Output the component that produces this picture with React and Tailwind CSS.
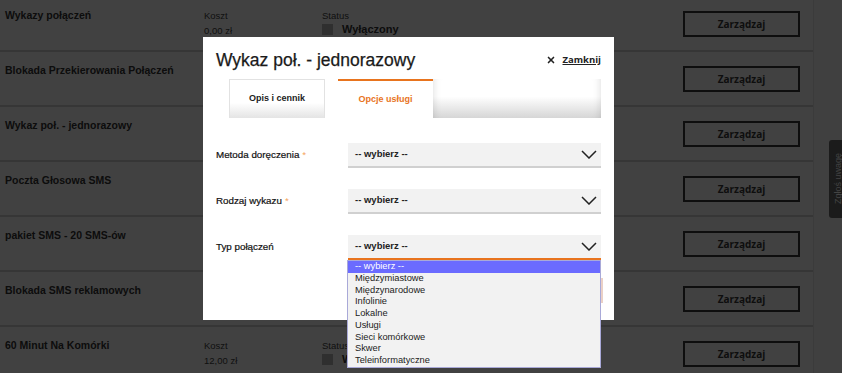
import { X } from "lucide-react";

const rows = [
  { name: "Wykazy połączeń", cost: "0,00 zł" },
  { name: "Blokada Przekierowania Połączeń", cost: "0,00 zł" },
  { name: "Wykaz poł. - jednorazowy", cost: "3,00 zł" },
  { name: "Poczta Głosowa SMS", cost: "0,00 zł" },
  { name: "pakiet SMS - 20 SMS-ów", cost: "5,00 zł" },
  { name: "Blokada SMS reklamowych", cost: "0,00 zł" },
  { name: "60 Minut Na Komórki", cost: "12,00 zł" },
];

const fields = ["Metoda doręczenia", "Rodzaj wykazu", "Typ połączeń"];

const options = [
  "Międzymiastowe",
  "Międzynarodowe",
  "Infolinie",
  "Lokalne",
  "Usługi",
  "Sieci komórkowe",
  "Skwer",
  "Teleinformatyczne",
];

function Chevron() {
  return (
    <svg width="16" height="9" viewBox="0 0 16 9" className="shrink-0">
      <polyline points="1,1 8,8 15,1" fill="none" stroke="#222" strokeWidth="1.5" />
    </svg>
  );
}

function ServiceRow({ row, first }) {
  return (
    <div className={`flex h-[55px] border-b-2 border-[#d2d2d2] ${first ? "mt-[-3px]" : ""}`}>
      <div className="w-[204px] pl-[5px] pt-[11px] text-[10.5px] font-bold text-[#333]">{row.name}</div>
      <div className="w-[118px] pt-[11px] text-[9.5px] leading-[15px] text-[#444]">
        <div>Koszt</div>
        <div>{row.cost}</div>
      </div>
      <div className="pt-[11px] text-[9.5px] leading-[15px] text-[#444]">
        <div>Status</div>
        <div className="flex items-center gap-[9px] mt-[-1px]">
          <span className="w-[11px] h-[11px] bg-[#b8b8b8]"></span>
          <span className="text-[11px] font-bold text-[#333]">Wyłączony</span>
        </div>
      </div>
      <button className="ml-auto mr-[13px] mt-[14px] w-[117px] h-[26px] border-2 border-[#3a3a3a] text-[10px] font-bold text-[#3a3a3a] font-['Open_Sans',sans-serif]">
        Zarządzaj
      </button>
    </div>
  );
}

export default function App() {
  return (
    <div className="relative w-[842px] h-[373px] overflow-hidden bg-white font-['Liberation_Sans',Arial,sans-serif]">
      {/* page under the dialog */}
      <div className="flex h-full">
        <div className="w-[814px] border-r border-[#e6e6e6]">
          {rows.map((r, i) => (
            <ServiceRow key={r.name} row={r} first={i === 0} />
          ))}
        </div>
        <div className="flex-1 bg-[#fafafa]"></div>
      </div>

      {/* dim overlay */}
      <div className="absolute inset-0 bg-black/[0.745]"></div>

      {/* feedback tab */}
      <div className="absolute right-0 top-[140px] w-[13px] h-[78px] rounded-l-[3px] bg-[#1b1b1b] overflow-hidden flex items-center">
        <span className="[writing-mode:vertical-rl] rotate-180 text-[9px] text-[#444] ml-[3px] whitespace-nowrap">Zgłoś uwagę</span>
      </div>

      {/* dialog */}
      <div className="absolute left-[203px] top-[37px] w-[411px] h-[283px] bg-white">
        <div className="flex items-start pl-[13px] pr-[13px] pt-[12px]">
          <h2 className="text-[17.5px] leading-[22px] text-[#1a1a1a] [-webkit-text-stroke:0.25px_#1a1a1a]">Wykaz poł. - jednorazowy</h2>
          <button className="ml-auto mt-[4px] flex items-center gap-[6px] text-[9.5px] font-bold text-[#222] font-['Open_Sans',sans-serif]">
            <X size={10} strokeWidth={4} />
            <span className="underline">Zamknij</span>
          </button>
        </div>

        <div className="flex mt-[8px] ml-[26px] mr-[13px] h-[39px]">
          <div className="w-[96px] flex items-center justify-center border border-[#e2e2e2] border-b-0 bg-gradient-to-b from-white from-60% to-[#e4e4e4] text-[9px] font-bold text-[#222]">
            Opis i cennik
          </div>
          <div className="w-[13px]"></div>
          <div className="w-[95px] flex items-center justify-center border-t-2 border-[#e8741e] bg-white text-[9px] font-bold text-[#e8741e]">
            Opcje usługi
          </div>
          <div className="flex-1 bg-gradient-to-b from-white from-45% to-[#d6d6d6] shadow-[inset_8px_0_8px_-8px_rgba(0,0,0,0.15),inset_-8px_0_8px_-8px_rgba(0,0,0,0.15)]"></div>
        </div>

        <div className="mt-[25px] ml-[13px] mr-[13px] flex flex-col gap-[21px]">
          {fields.map((f, i) => (
            <div key={f} className="flex items-center">
              <div className="w-[132px] text-[9.8px] text-[#111]">
                <span className="[-webkit-text-stroke:0.2px_#111]">{f}</span>
                {i < 2 && <span className="text-[#f5a35c] ml-[3px]">*</span>}
              </div>
              <div
                className={`relative w-[253px] h-[25px] flex items-center pl-[7px] pr-[4px] bg-[#f2f2f2] border-b-2 ${
                  i === 2 ? "border-[#e8741e]" : "border-[#d0d0d0]"
                }`}
              >
                <span className="text-[9.5px] font-bold text-[#222]">-- wybierz --</span>
                <span className="ml-auto">
                  <Chevron />
                </span>
                {i === 2 && (
                  <ul className="absolute left-[-1px] top-[25px] w-[254px] z-10 bg-[#f2f2f2] border border-[#a9a9d8] text-[9.3px] leading-[11.7px] text-[#222]">
                    <li className="bg-[#6b6bff] text-white pl-[7px] h-[12px]">-- wybierz --</li>
                    {options.map((o) => (
                      <li key={o} className="pl-[7px]">
                        {o}
                      </li>
                    ))}
                  </ul>
                )}
              </div>
            </div>
          ))}
        </div>

        <div className="flex justify-end mr-[11px] mt-[18px]">
          <div className="w-[100px] h-[25px] bg-[#ead0c6]"></div>
        </div>
      </div>
    </div>
  );
}
